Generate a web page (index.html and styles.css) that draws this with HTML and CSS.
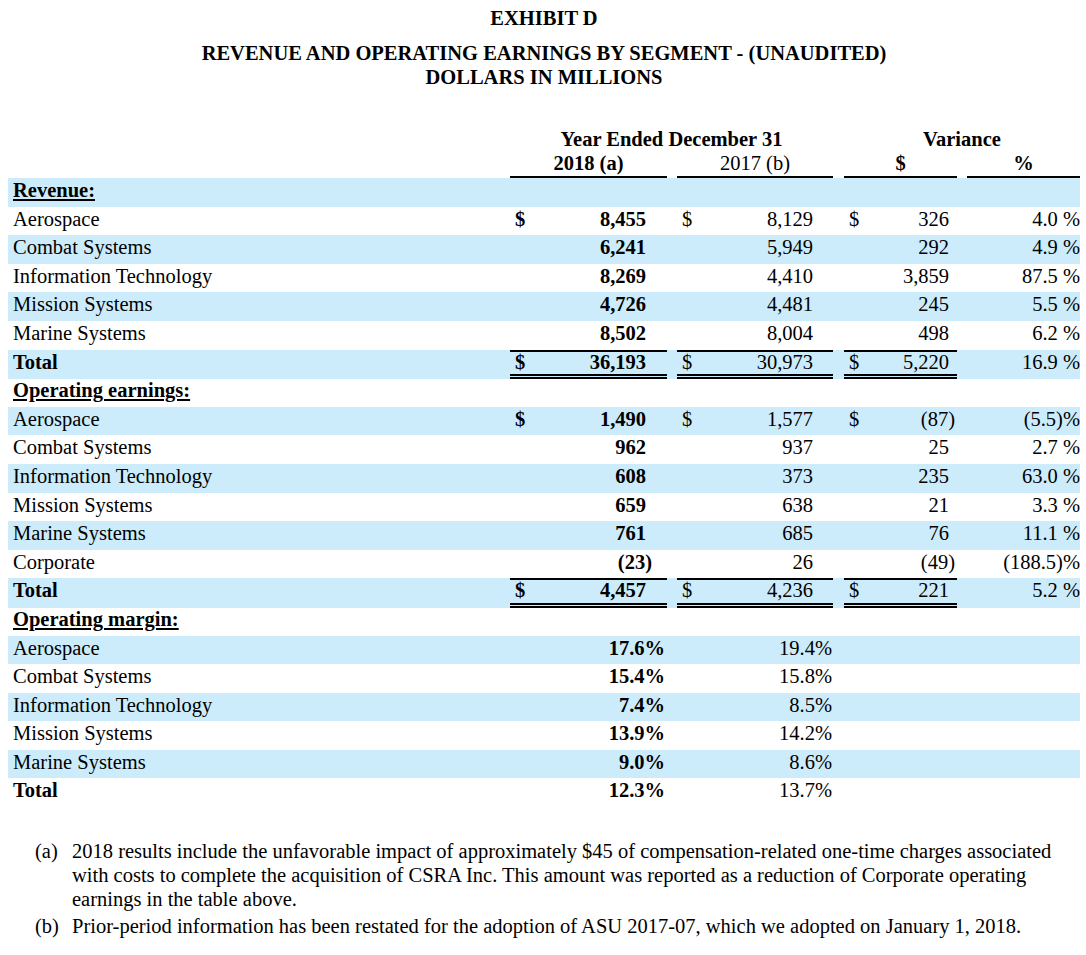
FILE: index.html
```html
<!DOCTYPE html>
<html>
<head>
<meta charset="utf-8">
<link rel="stylesheet" href="styles.css">
</head>
<body>
<div class="page">
  <div class="title">
    <div class="t1">EXHIBIT D</div>
    <div class="t2">REVENUE AND OPERATING EARNINGS BY SEGMENT - (UNAUDITED)</div>
    <div class="t3">DOLLARS IN MILLIONS</div>
  </div>

  <div class="table">
    <div class="hrow">
      <div class="h span-year b">Year Ended December 31</div>
      <div class="h span-var b">Variance</div>
    </div>
    <div class="hrow">
      <div class="h span-2018 b ul">2018 (a)</div>
      <div class="h span-2017 ul">2017 (b)</div>
      <div class="h span-vd b ul">$</div>
      <div class="h span-vp b ul">%</div>
    </div>

    <div class="row shade"><div class="c b u">Revenue:</div></div>
    <div class="row"><div class="c">Aerospace</div><div class="d b">$</div><div class="v b">8,455</div><div class="g"></div><div class="d">$</div><div class="v2">8,129</div><div class="g"></div><div class="d">$</div><div class="v3">326</div><div class="g"></div><div class="p">4.0 %</div></div>
    <div class="row shade"><div class="c">Combat Systems</div><div class="d"></div><div class="v b">6,241</div><div class="g"></div><div class="d"></div><div class="v2">5,949</div><div class="g"></div><div class="d"></div><div class="v3">292</div><div class="g"></div><div class="p">4.9 %</div></div>
    <div class="row"><div class="c">Information Technology</div><div class="d"></div><div class="v b">8,269</div><div class="g"></div><div class="d"></div><div class="v2">4,410</div><div class="g"></div><div class="d"></div><div class="v3">3,859</div><div class="g"></div><div class="p">87.5 %</div></div>
    <div class="row shade"><div class="c">Mission Systems</div><div class="d"></div><div class="v b">4,726</div><div class="g"></div><div class="d"></div><div class="v2">4,481</div><div class="g"></div><div class="d"></div><div class="v3">245</div><div class="g"></div><div class="p">5.5 %</div></div>
    <div class="row"><div class="c">Marine Systems</div><div class="d"></div><div class="v b">8,502</div><div class="g"></div><div class="d"></div><div class="v2">8,004</div><div class="g"></div><div class="d"></div><div class="v3">498</div><div class="g"></div><div class="p">6.2 %</div></div>
    <div class="row shade total"><div class="c b">Total</div><div class="d b tot">$</div><div class="v b tot">36,193</div><div class="g"></div><div class="d tot">$</div><div class="v2 tot">30,973</div><div class="g"></div><div class="d tot">$</div><div class="v3 tot">5,220</div><div class="g"></div><div class="p">16.9 %</div></div>

    <div class="row"><div class="c b u">Operating earnings:</div></div>
    <div class="row shade"><div class="c">Aerospace</div><div class="d b">$</div><div class="v b">1,490</div><div class="g"></div><div class="d">$</div><div class="v2">1,577</div><div class="g"></div><div class="d">$</div><div class="v3 neg">(87)</div><div class="g"></div><div class="p">(5.5)%</div></div>
    <div class="row"><div class="c">Combat Systems</div><div class="d"></div><div class="v b">962</div><div class="g"></div><div class="d"></div><div class="v2">937</div><div class="g"></div><div class="d"></div><div class="v3">25</div><div class="g"></div><div class="p">2.7 %</div></div>
    <div class="row shade"><div class="c">Information Technology</div><div class="d"></div><div class="v b">608</div><div class="g"></div><div class="d"></div><div class="v2">373</div><div class="g"></div><div class="d"></div><div class="v3">235</div><div class="g"></div><div class="p">63.0 %</div></div>
    <div class="row"><div class="c">Mission Systems</div><div class="d"></div><div class="v b">659</div><div class="g"></div><div class="d"></div><div class="v2">638</div><div class="g"></div><div class="d"></div><div class="v3">21</div><div class="g"></div><div class="p">3.3 %</div></div>
    <div class="row shade"><div class="c">Marine Systems</div><div class="d"></div><div class="v b">761</div><div class="g"></div><div class="d"></div><div class="v2">685</div><div class="g"></div><div class="d"></div><div class="v3">76</div><div class="g"></div><div class="p">11.1 %</div></div>
    <div class="row"><div class="c">Corporate</div><div class="d"></div><div class="v b neg">(23)</div><div class="g"></div><div class="d"></div><div class="v2">26</div><div class="g"></div><div class="d"></div><div class="v3 neg">(49)</div><div class="g"></div><div class="p">(188.5)%</div></div>
    <div class="row shade total"><div class="c b">Total</div><div class="d b tot">$</div><div class="v b tot">4,457</div><div class="g"></div><div class="d tot">$</div><div class="v2 tot">4,236</div><div class="g"></div><div class="d tot">$</div><div class="v3 tot">221</div><div class="g"></div><div class="p">5.2 %</div></div>

    <div class="row"><div class="c b u">Operating margin:</div></div>
    <div class="row shade"><div class="c">Aerospace</div><div class="d"></div><div class="v b pc">17.6%</div><div class="g"></div><div class="d"></div><div class="v2 pc">19.4%</div></div>
    <div class="row"><div class="c">Combat Systems</div><div class="d"></div><div class="v b pc">15.4%</div><div class="g"></div><div class="d"></div><div class="v2 pc">15.8%</div></div>
    <div class="row shade"><div class="c">Information Technology</div><div class="d"></div><div class="v b pc">7.4%</div><div class="g"></div><div class="d"></div><div class="v2 pc">8.5%</div></div>
    <div class="row"><div class="c">Mission Systems</div><div class="d"></div><div class="v b pc">13.9%</div><div class="g"></div><div class="d"></div><div class="v2 pc">14.2%</div></div>
    <div class="row shade"><div class="c">Marine Systems</div><div class="d"></div><div class="v b pc">9.0%</div><div class="g"></div><div class="d"></div><div class="v2 pc">8.6%</div></div>
    <div class="row"><div class="c b">Total</div><div class="d"></div><div class="v b pc">12.3%</div><div class="g"></div><div class="d"></div><div class="v2 pc">13.7%</div></div>
  </div>

  <div class="notes">
    <div class="note"><span class="mk">(a)</span><span class="nt">2018 results include the unfavorable impact of approximately $45 of compensation-related one-time charges associated<br>with costs to complete the acquisition of CSRA Inc. This amount was reported as a reduction of Corporate operating<br>earnings in the table above.</span></div>
    <div class="note nb"><span class="mk">(b)</span><span class="nt">Prior-period information has been restated for the adoption of ASU 2017-07, which we adopted on January 1, 2018.</span></div>
  </div>
</div>
</body>
</html>
```

FILE: styles.css
```css
* { box-sizing: border-box; }

body {
  margin: 0;
  background: #fff;
  color: #000;
  font-family: "Liberation Serif", "Times New Roman", serif;
  font-size: 20.5px;
}

.page {
  padding: 6px 6px 0 8px;
}

.title {
  text-align: center;
  font-weight: bold;
  line-height: 24px;
}

.t2 {
  margin-top: 11px;
}

.table {
  margin-top: 39px;
}

.hrow,
.row {
  display: grid;
  grid-template-columns: 502px 30px 127px 10px 30px 126px 11px 30px 83px 10px 113px;
}

.hrow {
  height: 24px;
}

.h {
  text-align: center;
  line-height: 22px;
  white-space: nowrap;
}

.span-year { grid-column: 2 / 7; }
.span-var { grid-column: 8 / 12; }
.span-2018 { grid-column: 2 / 4; }
.span-2017 { grid-column: 5 / 7; }
.span-vd { grid-column: 8 / 10; }
.span-vp { grid-column: 11 / 12; }

.ul {
  border-bottom: 2px solid #000;
}

.hrow:nth-child(2) {
  height: 26px;
}

.row {
  height: 28.6px;
}

.row > div {
  line-height: 25px;
  white-space: nowrap;
}

.shade {
  background: #ccecfc;
}

.b { font-weight: bold; }
.u { text-decoration: underline; text-decoration-thickness: 2px; text-underline-offset: 2px; }

.c {
  padding-left: 5px;
}

.d {
  padding-left: 5px;
}

.v {
  text-align: right;
  padding-right: 21px;
}

.v2 {
  text-align: right;
  padding-right: 20px;
}

.v3 {
  text-align: right;
  padding-right: 8px;
}

.v.neg { padding-right: 15px; }
.v3.neg { padding-right: 2px; }
.v.pc { padding-right: 2px; }
.v2.pc { padding-right: 1px; }

.p {
  text-align: right;
}

.row.total {
  height: 29.6px;
  margin-bottom: -1px;
}

.total > div {
  border-top: 2px solid transparent;
  border-bottom: 5px double transparent;
  line-height: 20px;
}

.total > .tot {
  border-top-color: #000;
  border-bottom-color: #000;
}

.notes {
  margin-top: 32px;
  padding-left: 27px;
  line-height: 24px;
}

.note {
  display: flex;
}

.nb {
  margin-top: 3px;
}

.mk {
  width: 37px;
  flex: none;
}

.nt {
  white-space: nowrap;
}
```
